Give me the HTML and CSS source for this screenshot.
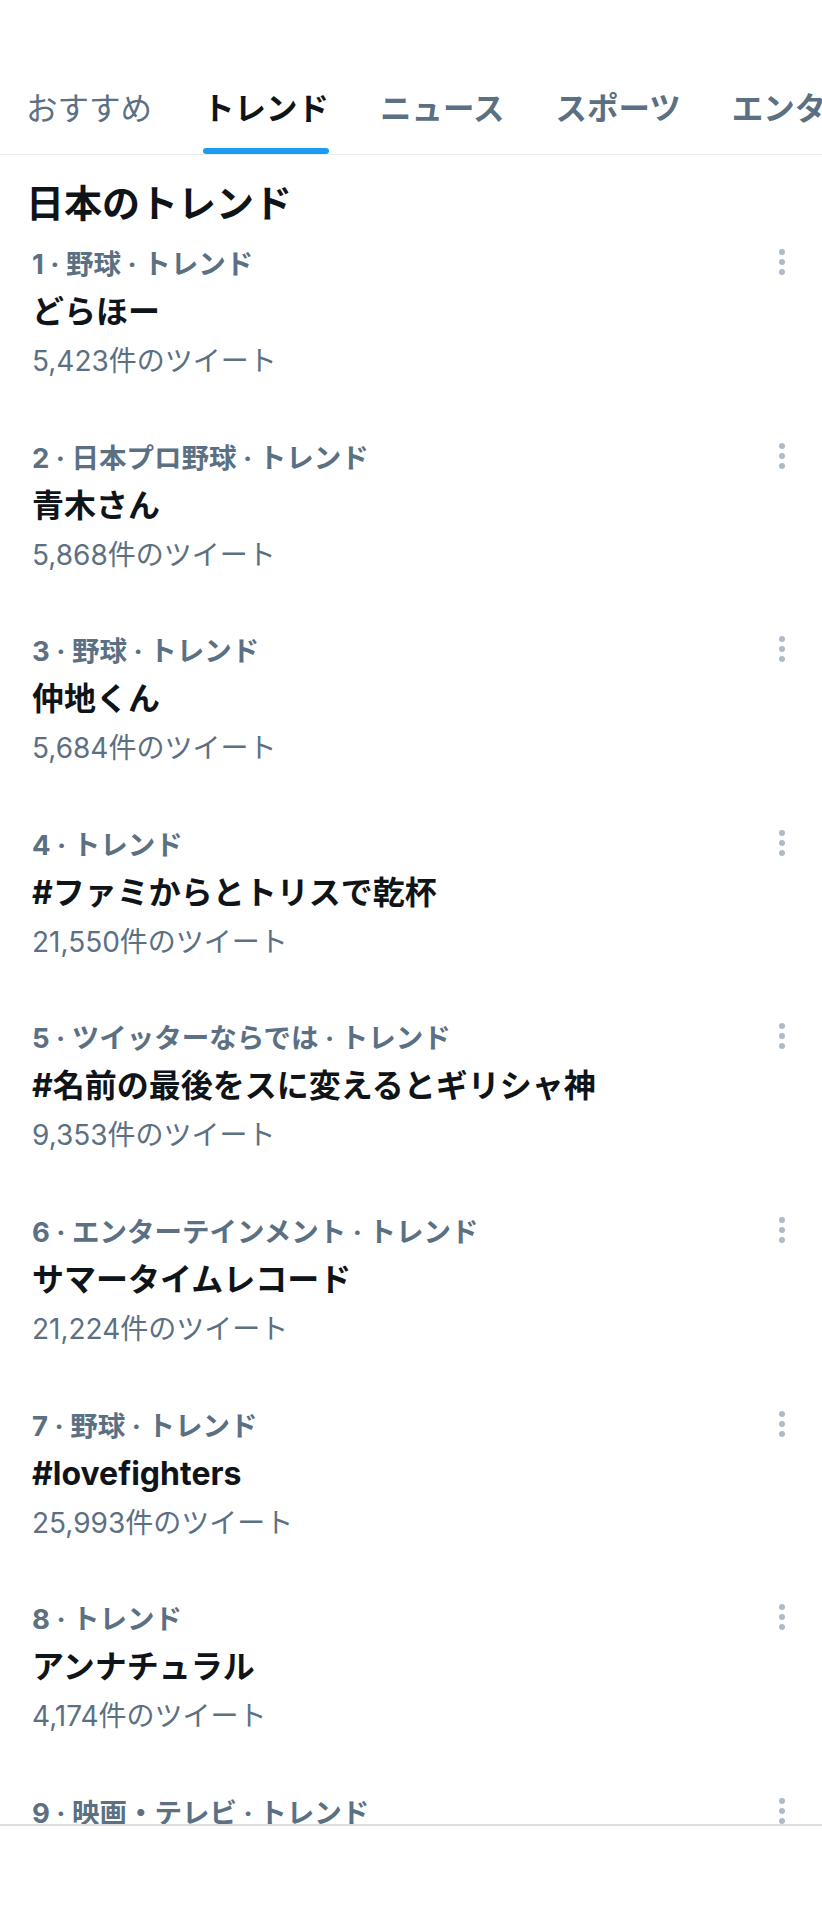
FILE: index.html
```html
<!DOCTYPE html>
<html lang="ja">
<head>
  <title>話題を検索</title>
  <meta charset="UTF-8">
  <meta name="viewport" content="width=device-width, initial-scale=1.0">
  <link rel="stylesheet" href="styles.css">
</head>
<body>
  <nav class="tabs">
    <div class="tab tab-light"><span class="tab-label">おすすめ</span><span class="tab-bar"></span></div>
    <div class="tab active"><span class="tab-label">トレンド</span><span class="tab-bar"></span></div>
    <div class="tab"><span class="tab-label">ニュース</span><span class="tab-bar"></span></div>
    <div class="tab"><span class="tab-label">スポーツ</span><span class="tab-bar"></span></div>
    <div class="tab"><span class="tab-label">エンタメ</span><span class="tab-bar"></span></div>
  </nav>

  <main class="feed">
    <h1 class="feed-title">日本のトレンド</h1>

    <div class="trend">
      <div class="trend-meta"><span>1 · 野球 · トレンド</span><svg class="more" viewBox="0 0 20 28"><circle cx="10" cy="4" r="3"/><circle cx="10" cy="14" r="3"/><circle cx="10" cy="24" r="3"/></svg></div>
      <div class="trend-name">どらほー</div>
      <div class="trend-count">5,423件のツイート</div>
    </div>

    <div class="trend">
      <div class="trend-meta"><span>2 · 日本プロ野球 · トレンド</span><svg class="more" viewBox="0 0 20 28"><circle cx="10" cy="4" r="3"/><circle cx="10" cy="14" r="3"/><circle cx="10" cy="24" r="3"/></svg></div>
      <div class="trend-name">青木さん</div>
      <div class="trend-count">5,868件のツイート</div>
    </div>

    <div class="trend">
      <div class="trend-meta"><span>3 · 野球 · トレンド</span><svg class="more" viewBox="0 0 20 28"><circle cx="10" cy="4" r="3"/><circle cx="10" cy="14" r="3"/><circle cx="10" cy="24" r="3"/></svg></div>
      <div class="trend-name">仲地くん</div>
      <div class="trend-count">5,684件のツイート</div>
    </div>

    <div class="trend">
      <div class="trend-meta"><span>4 · トレンド</span><svg class="more" viewBox="0 0 20 28"><circle cx="10" cy="4" r="3"/><circle cx="10" cy="14" r="3"/><circle cx="10" cy="24" r="3"/></svg></div>
      <div class="trend-name">#ファミからとトリスで乾杯</div>
      <div class="trend-count">21,550件のツイート</div>
    </div>

    <div class="trend">
      <div class="trend-meta"><span>5 · ツイッターならでは · トレンド</span><svg class="more" viewBox="0 0 20 28"><circle cx="10" cy="4" r="3"/><circle cx="10" cy="14" r="3"/><circle cx="10" cy="24" r="3"/></svg></div>
      <div class="trend-name">#名前の最後をスに変えるとギリシャ神</div>
      <div class="trend-count">9,353件のツイート</div>
    </div>

    <div class="trend">
      <div class="trend-meta"><span>6 · エンターテインメント · トレンド</span><svg class="more" viewBox="0 0 20 28"><circle cx="10" cy="4" r="3"/><circle cx="10" cy="14" r="3"/><circle cx="10" cy="24" r="3"/></svg></div>
      <div class="trend-name">サマータイムレコード</div>
      <div class="trend-count">21,224件のツイート</div>
    </div>

    <div class="trend">
      <div class="trend-meta"><span>7 · 野球 · トレンド</span><svg class="more" viewBox="0 0 20 28"><circle cx="10" cy="4" r="3"/><circle cx="10" cy="14" r="3"/><circle cx="10" cy="24" r="3"/></svg></div>
      <div class="trend-name">#lovefighters</div>
      <div class="trend-count">25,993件のツイート</div>
    </div>

    <div class="trend">
      <div class="trend-meta"><span>8 · トレンド</span><svg class="more" viewBox="0 0 20 28"><circle cx="10" cy="4" r="3"/><circle cx="10" cy="14" r="3"/><circle cx="10" cy="24" r="3"/></svg></div>
      <div class="trend-name">アンナチュラル</div>
      <div class="trend-count">4,174件のツイート</div>
    </div>

    <div class="trend">
      <div class="trend-meta"><span>9 · 映画・テレビ · トレンド</span><svg class="more" viewBox="0 0 20 28"><circle cx="10" cy="4" r="3"/><circle cx="10" cy="14" r="3"/><circle cx="10" cy="24" r="3"/></svg></div>
    </div>
  </main>
</body>
</html>
```

FILE: styles.css
```css
body {
  margin: 0;
  background: #fff;
  color: #0f1419;
  font-family: Inter, 'Noto Sans CJK JP', sans-serif;
}
.tabs {
  display: flex;
  gap: 51px;
  padding: 89px 0 0 26px;
  border-bottom: 1px solid #e6ecf0;
  overflow: hidden;
  white-space: nowrap;
}
.tab {
  display: flex;
  flex-direction: column;
  flex-shrink: 0;
  color: #5b7083;
  font-size: 31.5px;
  font-weight: 700;
}
.tab-light {
  font-weight: 400;
}
.tab-label {
  line-height: 40px;
}
.tab-bar {
  height: 6px;
  margin-top: 19px;
  border-radius: 3px;
}
.tab.active {
  color: #0f1419;
}
.tab.active .tab-bar {
  background: #1d9bf0;
}
.feed {
  height: 1669px;
  overflow: hidden;
  border-bottom: 2px solid #dedede;
}
.feed-title {
  margin: 0;
  padding: 26px 26px 0;
  font-size: 38px;
  line-height: 44px;
  font-weight: 700;
}
.trend {
  padding: 21px 30px 41.6px 32px;
}
.trend-meta {
  display: flex;
  justify-content: space-between;
  align-items: center;
  height: 32px;
  color: #5b7083;
  font-size: 27.5px;
  font-weight: 700;
}
.more {
  width: 20px;
  height: 28px;
  fill: #aebbc7;
}
.trend-name {
  margin-top: 14px;
  font-size: 32px;
  line-height: 40px;
  font-weight: 700;
}
.trend-count {
  margin-top: 13px;
  color: #5b7083;
  font-size: 28px;
  line-height: 32px;
}
```
